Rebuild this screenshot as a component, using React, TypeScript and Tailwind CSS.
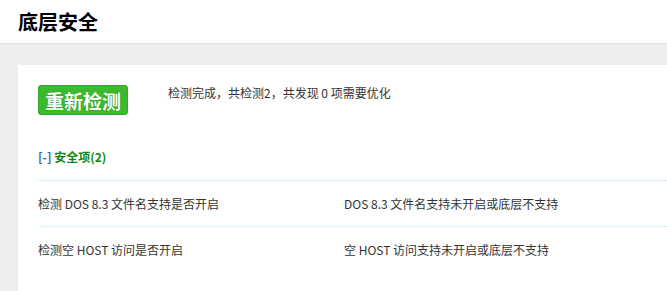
import React from "react";

const rows = [
  { name: "检测 DOS 8.3 文件名支持是否开启", result: "DOS 8.3 文件名支持未开启或底层不支持" },
  { name: "检测空 HOST 访问是否开启", result: "空 HOST 访问支持未开启或底层不支持" },
];

const App = () => {
  return (
    <div
      className="min-h-screen bg-[#eeeeee] text-[#333]"
      style={{ fontFamily: '"Microsoft YaHei", "Noto Sans CJK SC", "Liberation Sans", sans-serif' }}
    >
      <div className="h-[44px] bg-white border-b border-[#dddddd] flex items-center pl-[18px]">
        <h1 className="text-[20px] font-bold text-black leading-none">底层安全</h1>
      </div>
      <div className="pt-[21px] pl-[18px]">
        <div className="bg-white pl-[20px] pt-[20px] pb-[20px] min-h-[240px]">
          <div className="flex items-center">
            <button
              type="button"
              className="w-[90px] h-[30px] rounded-[3px] bg-[#3cba2f] border border-[#2eab22] text-white text-[19px] font-bold leading-none"
              style={{ textShadow: "0 0 1px #1a7a10" }}
            >
              重新检测
            </button>
            <p className="ml-[40px] text-[12px] text-[#333] -mt-[14px]">
              检测完成，共检测2，共发现 0 项需要优化
            </p>
          </div>
          <div className="mt-[36px] text-[12px] font-bold leading-none">
            <span className="text-[#3568a8]">[-]</span>{" "}
            <span className="text-[#118811]">安全项(2)</span>
          </div>
          <div className="mt-[17px]">
            {rows.map((r) => (
              <div
                key={r.name}
                className="h-[46px] border-t border-dotted border-[#c8e4f4] flex items-center text-[12px]"
              >
                <div className="w-[306px]">{r.name}</div>
                <div>{r.result}</div>
              </div>
            ))}
          </div>
        </div>
      </div>
    </div>
  );
};

export default App;
